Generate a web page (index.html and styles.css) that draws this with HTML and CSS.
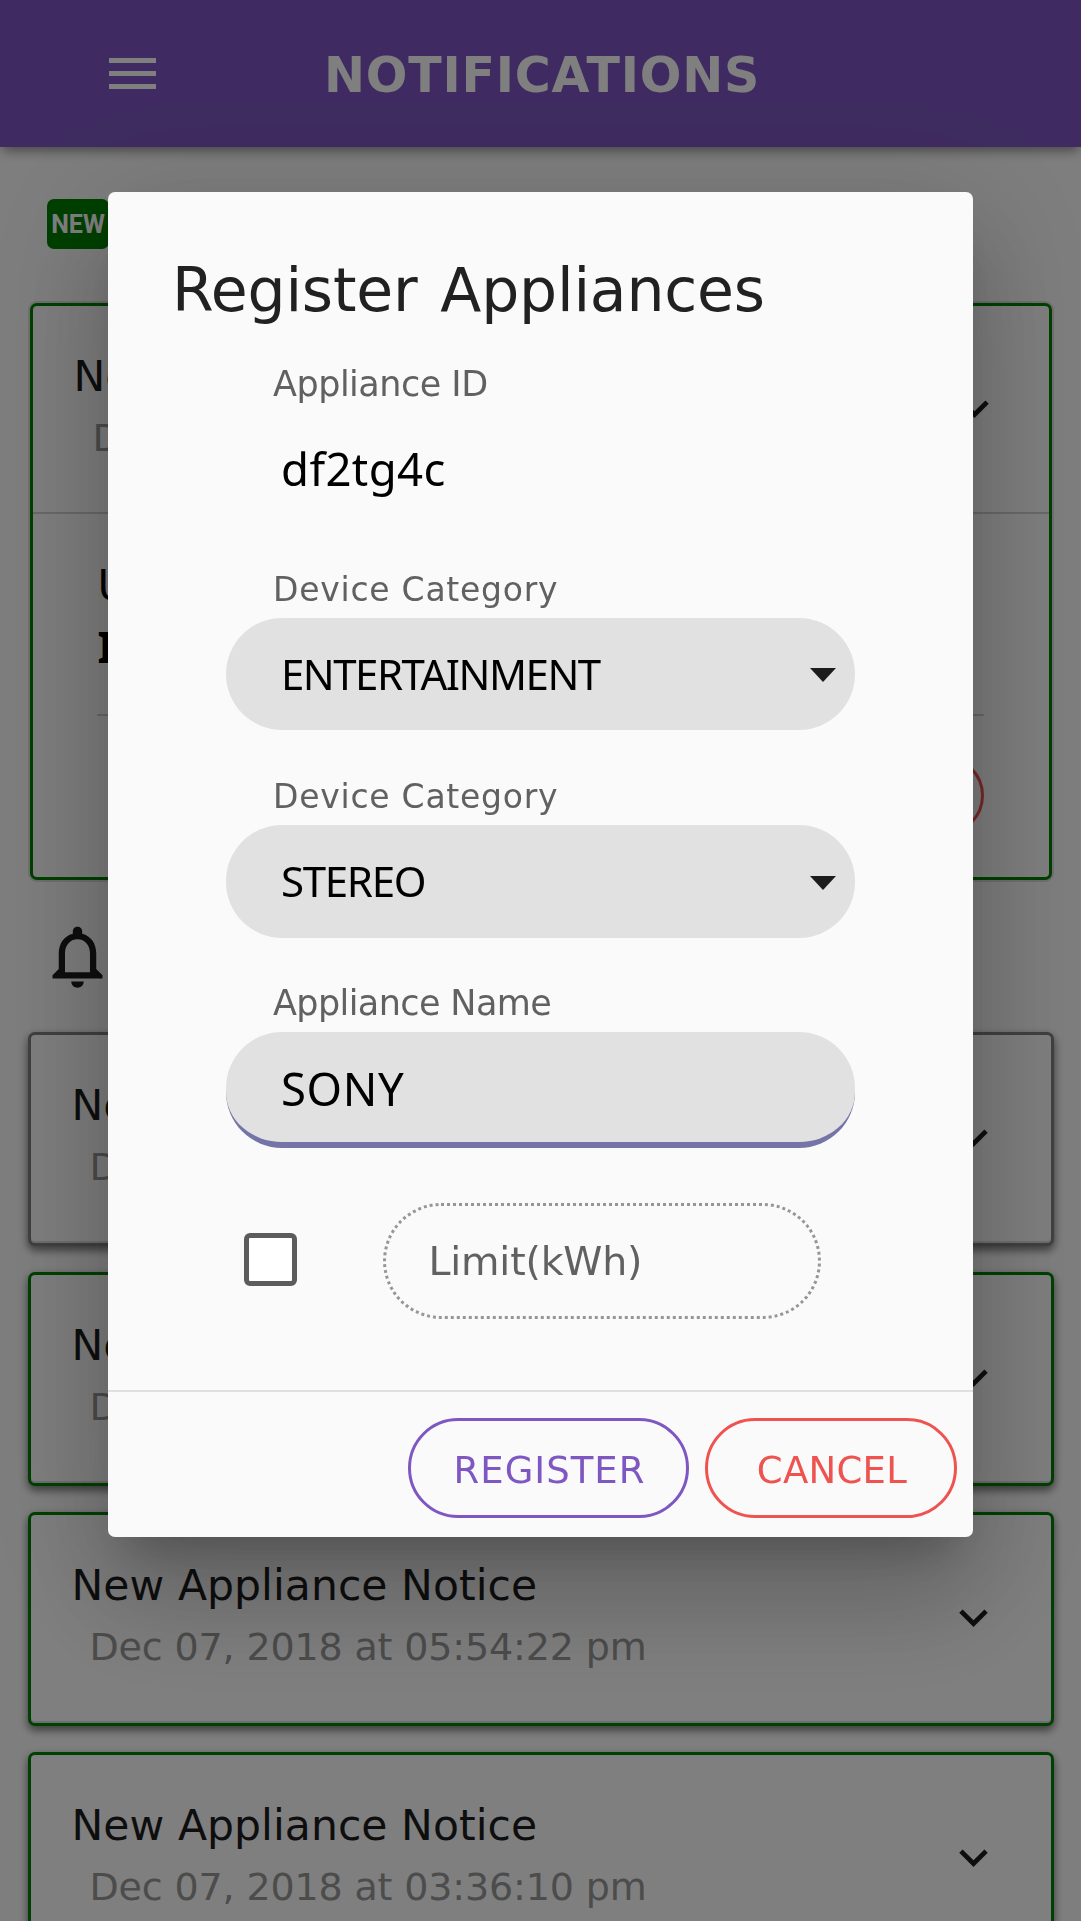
FILE: index.html
```html
<!DOCTYPE html>
<html lang="en">
<head>
<meta charset="utf-8">
<title>Notifications</title>
<link rel="stylesheet" href="styles.css">
</head>
<body>
<header class="app-bar">
  <div class="menu"><i></i><i></i><i></i></div>
  <h1 class="app-title">NOTIFICATIONS</h1>
</header>
<main class="page">
  <div class="section-head"><span class="new-badge">NEW</span></div>
  <article class="card card-open">
    <div class="card-head">
      <div><div class="card-title">Ne</div><div class="card-date">D</div></div>
      <svg class="chevron" viewBox="0 0 24 24"><path d="M16.59 8.59L12 13.17 7.41 8.59 6 10l6 6 6-6z"/></svg>
    </div>
    <div class="card-body">
      <p class="line">U</p>
      <p class="line strong">I</p>
      <div class="card-actions"><span class="dismiss"></span></div>
    </div>
  </article>
  <div class="bell-row"><svg class="bell" viewBox="0 0 24 24"><path d="M12 22c1.1 0 2-.9 2-2h-4c0 1.1.9 2 2 2zm6-6v-5c0-3.07-1.63-5.64-4.5-6.32V4c0-.83-.67-1.5-1.5-1.5s-1.5.67-1.5 1.5v.68C7.64 5.36 6 7.92 6 11v5l-2 2v1h16v-1l-2-2zm-2 1H8v-6c0-2.48 1.51-4.5 4-4.5s4 2.02 4 4.5v6z"/></svg></div>
  <section class="list">
    <article class="card notice read">
      <div><div class="card-title">Ne</div><div class="card-date">D</div></div>
      <svg class="chevron" viewBox="0 0 24 24"><path d="M16.59 8.59L12 13.17 7.41 8.59 6 10l6 6 6-6z"/></svg>
    </article>
    <article class="card notice">
      <div><div class="card-title">Ne</div><div class="card-date">D</div></div>
      <svg class="chevron" viewBox="0 0 24 24"><path d="M16.59 8.59L12 13.17 7.41 8.59 6 10l6 6 6-6z"/></svg>
    </article>
    <article class="card notice">
      <div><div class="card-title">New Appliance Notice</div><div class="card-date">Dec 07, 2018 at 05:54:22 pm</div></div>
      <svg class="chevron" viewBox="0 0 24 24"><path d="M16.59 8.59L12 13.17 7.41 8.59 6 10l6 6 6-6z"/></svg>
    </article>
    <article class="card notice">
      <div><div class="card-title">New Appliance Notice</div><div class="card-date">Dec 07, 2018 at 03:36:10 pm</div></div>
      <svg class="chevron" viewBox="0 0 24 24"><path d="M16.59 8.59L12 13.17 7.41 8.59 6 10l6 6 6-6z"/></svg>
    </article>
  </section>
</main>
<div class="backdrop">
  <div class="dialog" role="dialog">
    <h2 class="dialog-title">Register Appliances</h2>
    <div class="form">
      <div class="label id-label">Appliance ID</div>
      <div class="value">df2tg4c</div>
      <div class="label wide first-cat">Device Category</div>
      <div class="pill"><span class="entertainment">ENTERTAINMENT</span><i class="arrow"></i></div>
      <div class="label wide next">Device Category</div>
      <div class="pill tall"><span class="stereo">STEREO</span><i class="arrow"></i></div>
      <div class="label name-label">Appliance Name</div>
      <div class="pill input"><span>SONY</span></div>
      <div class="limit-row">
        <span class="checkbox"></span>
        <div class="limit">Limit(kWh)</div>
      </div>
    </div>
    <footer class="dialog-actions">
      <button class="btn register">REGISTER</button>
      <button class="btn cancel">CANCEL</button>
    </footer>
  </div>
</div>
</body>
</html>
```
FILE: styles.css
```css
* { box-sizing: border-box; }
body {
  margin: 0;
  height: 1921px;
  overflow: hidden;
  background: #fdfdfd;
  color: #1c1c1c;
  font-family: "DejaVu Sans", Verdana, sans-serif;
}
h1, h2, p { margin: 0; font-weight: normal; }

.app-bar {
  position: relative;
  display: flex;
  align-items: center;
  height: 147px;
  padding-left: 109px;
  background: #7e57c2;
  color: #fff;
  box-shadow: 0 5px 11px -3px rgba(0,0,0,.4), 0 8px 12px -2px rgba(0,0,0,.12);
}
.menu { display: flex; flex-direction: column; gap: 8px; width: 47px; }
.menu i { height: 5px; background: #fff; }
.app-title {
  margin-left: 168px;
  padding-top: 5px;
  font-size: 49px;
  font-weight: bold;
  line-height: 60px;
  letter-spacing: .8px;
}

.page { padding: 52px 27.5px 0; }
.section-head { display: flex; height: 104px; padding-left: 19.5px; }
.new-badge {
  width: 62px;
  height: 50px;
  border-radius: 7px;
  background: #008000;
  color: #fff;
  font: bold 25px/52px Roboto, sans-serif;
  text-align: center;
}
.card {
  border: 3px solid #008000;
  border-radius: 7px;
  background: #fefefe;
}
.card-open { height: 577px; margin: 0 2px; box-shadow: 0 0 0 2px rgba(0,0,0,.12); }
.card-head {
  display: flex;
  justify-content: space-between;
  height: 208px;
  padding: 46px 46px 0 41px;
  border-bottom: 2px solid #d2d2d2;
}
.card-title { height: 61px; line-height: 50px; font-size: 42.5px; letter-spacing: .05px; white-space: nowrap; }
.card-date { padding-left: 18px; line-height: 50px; font-size: 38px; letter-spacing: -.15px; color: #999; white-space: nowrap; }
.card-open .card-date { padding-left: 19px; }
.chevron { width: 57px; height: 57px; margin-top: 28px; flex: none; fill: #1c1c1c; }
.card-body { padding: 41px 65px 0 64px; }
.line { padding-left: 1px; line-height: 62px; font-size: 42.5px; color: #000; }
.line.strong { margin-top: -1px; font-family: "Noto Sans", sans-serif; font-weight: bold; }
.card-actions {
  display: flex;
  justify-content: flex-end;
  margin-top: 36px;
  padding-top: 40px;
  border-top: 2px solid #d2d2d2;
}
.dismiss { width: 200px; height: 79px; border: 3px solid #ef5350; border-radius: 40px; }
.bell-row { height: 152px; padding: 38.5px 0 0 12.5px; }
.bell { display: block; width: 75px; height: 75px; fill: #1c1c1c; }
.list { display: flex; flex-direction: column; gap: 26px; }
.notice {
  display: flex;
  justify-content: space-between;
  height: 214px;
  padding: 46px 49px 0 41px;
  box-shadow: inset 0 -2px 0 #dcdcdc, 0 3px 8px rgba(0,0,0,.3), 0 5px 9px rgba(0,0,0,.3);
}
.read { border-color: #808080; }

.backdrop { position: fixed; inset: 0; padding: 192px 108px 0; background: rgba(0,0,0,.5); }
.dialog {
  height: 1345px;
  padding-top: 63px;
  border-radius: 7px;
  background: #fafafa;
  box-shadow: 0 30px 41px -19px rgba(0,0,0,.2), 0 65px 104px 8px rgba(0,0,0,.14), 0 25px 126px 22px rgba(0,0,0,.12);
}
.dialog-title { padding-left: 64px; font-size: 60px; line-height: 70px; letter-spacing: -.2px; word-spacing: 4px; color: #212121; }
.form { height: 1065px; padding: 39px 118px 0; }
.label { padding-left: 47px; font-size: 35px; line-height: 40px; color: #616161; }
.id-label { letter-spacing: -.5px; }
.wide { font-size: 33px; letter-spacing: .75px; }
.first-cat { margin: 72px 0 8px; }
.next { margin: 47px 0 8px; }
.name-label { margin: 45px 0 9px; letter-spacing: -.6px; }
.value {
  margin-top: 34px;
  padding-left: 55px;
  color: #000;
  font: 45.5px/60px "Noto Sans", sans-serif;
  letter-spacing: .4px;
}
.pill {
  display: flex;
  justify-content: space-between;
  align-items: center;
  height: 112px;
  padding: 0 19px 0 55px;
  border-radius: 56px;
  background: #e1e1e1;
  color: #000;
  font: 42px/60px "Noto Sans", sans-serif;
}
.tall { height: 113px; }
.entertainment { letter-spacing: -1.5px; }
.stereo { margin-top: -2px; letter-spacing: -1.3px; }
.arrow { margin-top: 2px; border: 13px solid transparent; border-top: 14px solid #1c1c1c; border-bottom: 0; }
.input { height: 116px; padding-top: 2px; border-bottom: 6px solid #7474a6; font-size: 45.5px; letter-spacing: .6px; }
.limit-row { display: flex; align-items: center; margin-top: 55px; padding-left: 18px; }
.checkbox { width: 53px; height: 53px; margin-bottom: 3px; border: 5px solid #5c5c5c; border-radius: 6px; background: #fff; }
.limit {
  width: 438px;
  height: 116px;
  margin-left: 86px;
  padding-left: 42.5px;
  border: 3px dotted #969696;
  border-radius: 58px;
  color: #616161;
  font-size: 39.5px;
  line-height: 110px;
  letter-spacing: -.2px;
}
.dialog-actions {
  display: flex;
  justify-content: flex-end;
  gap: 16px;
  height: 147px;
  padding: 26px 16px 0;
  border-top: 2px solid #e0e0e0;
}
.btn {
  height: 100px;
  padding: 5px 0 0 2px;
  border: 3px solid currentColor;
  border-radius: 50px;
  background: none;
  font: 37px/90px "DejaVu Sans", Verdana, sans-serif;
}
.register { width: 281px; color: #7e57c2; letter-spacing: 1px; }
.cancel { width: 252px; color: #ef5350; letter-spacing: .3px; }
```
